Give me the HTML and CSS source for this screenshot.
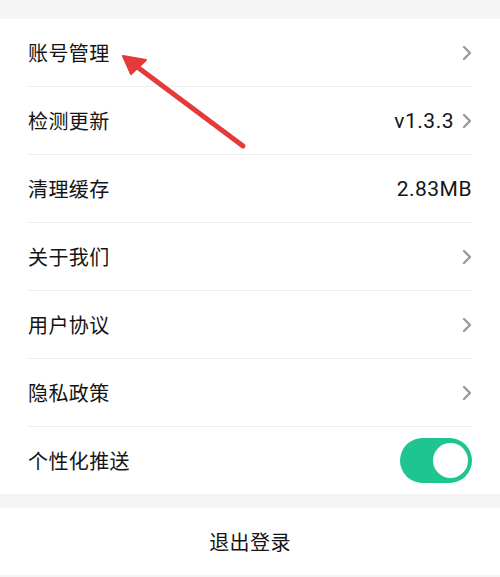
FILE: index.html
```html
<!DOCTYPE html>
<html lang="zh">
<head>
<meta charset="utf-8">
<link rel="stylesheet" href="styles.css">
</head>
<body>
<div class="page">
  <div class="top-gap"></div>
  <ul class="list">
    <li class="row"><span class="label">账号管理</span><span class="right"><svg class="chev" viewBox="0 0 10 16"><path d="M2 2 L8 8 L2 14"/></svg></span></li>
    <li class="row"><span class="label">检测更新</span><span class="right"><span class="value">v1.3.3</span><svg class="chev" viewBox="0 0 10 16"><path d="M2 2 L8 8 L2 14"/></svg></span></li>
    <li class="row"><span class="label">清理缓存</span><span class="right"><span class="value">2.83MB</span></span></li>
    <li class="row"><span class="label">关于我们</span><span class="right"><svg class="chev" viewBox="0 0 10 16"><path d="M2 2 L8 8 L2 14"/></svg></span></li>
    <li class="row"><span class="label">用户协议</span><span class="right"><svg class="chev" viewBox="0 0 10 16"><path d="M2 2 L8 8 L2 14"/></svg></span></li>
    <li class="row"><span class="label">隐私政策</span><span class="right"><svg class="chev" viewBox="0 0 10 16"><path d="M2 2 L8 8 L2 14"/></svg></span></li>
    <li class="row last"><span class="label">个性化推送</span><span class="right"><span class="switch"><span class="knob"></span></span></span></li>
  </ul>
  <div class="mid-gap"></div>
  <div class="logout">退出登录</div>
  <div class="bottom-line"></div>
  <svg class="arrow" viewBox="0 0 500 577" width="500" height="577">
    <line x1="243" y1="146" x2="136" y2="66" />
    <polygon points="123,56 146,60 131,74" />
  </svg>
</div>
</body>
</html>
```

FILE: styles.css
```css
* { box-sizing: border-box; }
html, body { margin: 0; padding: 0; background: #ffffff; }
body {
  font-family: "Noto Sans CJK SC", "Noto Sans", sans-serif;
  color: #141414;
}
.page {
  position: relative;
  width: 500px;
  height: 577px;
  overflow: hidden;
  background: #ffffff;
}
.top-gap { height: 19px; background: #f5f5f5; }
.list { list-style: none; margin: 0; padding: 0 28px; background: #fff; }
.row {
  height: 68px;
  display: flex;
  align-items: center;
  justify-content: space-between;
  border-bottom: 1px solid #efefef;
}
.row.last { border-bottom: none; height: 67px; }
.label { font-size: 20px; letter-spacing: 0.4px; line-height: 1; }
.right { display: flex; align-items: center; gap: 8px; }
.value {
  font-family: "Roboto", "Noto Sans", sans-serif;
  font-size: 21px;
  color: #141414;
  letter-spacing: 0.5px;
}
.chev { width: 10px; height: 16px; }
.chev path { fill: none; stroke: #9a9a9a; stroke-width: 2.4; stroke-linecap: round; stroke-linejoin: round; }
.switch {
  width: 72px; height: 45px;
  border-radius: 23px;
  background: #1fc590;
  display: flex;
  align-items: center;
  justify-content: flex-end;
  padding-right: 4px;
}
.knob { width: 35px; height: 35px; border-radius: 50%; background: #fff; }
.mid-gap { height: 14px; background: #f5f5f5; }
.logout {
  height: 67px;
  display: flex;
  align-items: center;
  justify-content: center;
  font-size: 20px;
  letter-spacing: 0.4px;
}
.bottom-line { height: 2px; background: #f3f3f3; }
.arrow { position: absolute; left: 0; top: 0; pointer-events: none; }
.arrow line { stroke: #e53a3a; stroke-width: 5; stroke-linecap: round; }
.arrow polygon { fill: #e53a3a; stroke: #e53a3a; stroke-width: 2; stroke-linejoin: round; }
```
